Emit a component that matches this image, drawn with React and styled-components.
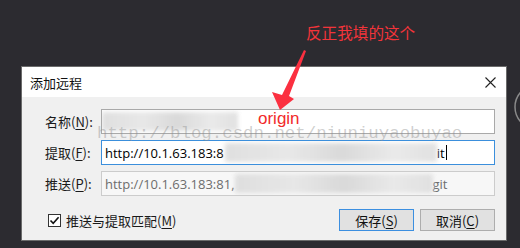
import React from "react";
import styled, { createGlobalStyle } from "styled-components";

const Global = createGlobalStyle`
  html, body { margin: 0; padding: 0; }
  body {
    background: #2c2b30;
    width: 520px;
    height: 248px;
    overflow: hidden;
    font-family: "Noto Sans CJK SC", "Liberation Sans", sans-serif;
  }
`;

const Desktop = styled.div`
  position: relative;
  width: 520px;
  height: 248px;
  padding: 66px 0 0 21px;
  box-sizing: border-box;
`;

const Dialog = styled.div`
  width: 486px;
  height: 175px;
  box-sizing: border-box;
  border: 1px solid #6b6b6b;
  background: #f0f0f0;
  display: flex;
  flex-direction: column;
`;

const TitleBar = styled.div`
  height: 30px;
  background: #ffffff;
  display: flex;
  align-items: center;
  justify-content: space-between;
  padding: 0 10px 0 8px;
  font-size: 13px;
  color: #111;
`;

const CloseBtn = styled.svg`
  width: 11px;
  height: 11px;
`;

const Body = styled.div`
  flex: 1;
  padding: 12px 11px 0 23px;
  display: flex;
  flex-direction: column;
  gap: 6px;
`;

const Row = styled.div`
  display: flex;
  align-items: center;
  height: 25px;
`;

const Label = styled.div`
  width: 56px;
  font-size: 13px;
  color: #1a1a1a;
  white-space: nowrap;
  u { text-decoration: underline; text-underline-offset: 2px; }
`;

const Field = styled.div`
  position: relative;
  flex: 1;
  height: 25px;
  box-sizing: border-box;
  border: 1px solid ${(p) => (p.$focus ? "#3b8fdc" : p.$disabled ? "#cccccc" : "#a9a9a9")};
  background: ${(p) => (p.$disabled ? "#f7f7f7" : "#ffffff")};
  color: ${(p) => (p.$disabled ? "#6d6d6d" : "#000")};
  display: flex;
  align-items: center;
  padding-left: 3px;
  font-family: "Open Sans", "Liberation Sans", sans-serif;
  font-size: 13px;
  overflow: hidden;
  white-space: nowrap;
`;

const Blur = styled.span`
  display: inline-block;
  width: ${(p) => p.$w}px;
  height: 19px;
  margin-left: ${(p) => p.$ml || 0}px;
  background: linear-gradient(90deg, #dcdcdc, #e6e6e6 30%, #d6d6d6 55%, #e8e8e8 80%, #dedede);
  filter: blur(2px);
  opacity: 0.9;
`;

const Caret = styled.span`
  display: inline-block;
  width: 1px;
  height: 15px;
  background: #000;
  margin-left: 1px;
`;

const Origin = styled.span`
  position: absolute;
  left: 156px;
  top: -1px;
  font-family: "Liberation Sans", sans-serif;
  font-size: 17px;
  color: #f22a2a;
`;

const Footer = styled.div`
  display: flex;
  align-items: center;
  height: 22px;
  margin-top: 7px;
`;

const Check = styled.label`
  display: flex;
  align-items: center;
  gap: 5px;
  margin-left: 3px;
  font-size: 13px;
  color: #1a1a1a;
  flex: 1;
  u { text-decoration: underline; text-underline-offset: 2px; }
`;

const Box = styled.span`
  width: 13px;
  height: 13px;
  box-sizing: border-box;
  border: 1px solid #333;
  background: #fff;
  display: flex;
  align-items: center;
  justify-content: center;
`;

const Buttons = styled.div`
  display: flex;
  gap: 6px;
`;

const Button = styled.button`
  width: ${(p) => p.$w}px;
  height: 22px;
  box-sizing: border-box;
  border: 1px solid ${(p) => (p.$default ? "#3c8fe0" : "#adadad")};
  background: #e1e1e1;
  font-family: "Noto Sans CJK SC", sans-serif;
  font-size: 13px;
  color: #111;
  padding: 0;
  display: flex;
  align-items: center;
  justify-content: center;
  u { text-decoration: underline; text-underline-offset: 2px; }
`;

const Watermark = styled.div`
  position: absolute;
  left: 97px;
  top: 124px;
  font-family: "Liberation Mono", monospace;
  font-size: 17.4px;
  color: rgba(140, 140, 140, 0.42);
  pointer-events: none;
  white-space: nowrap;
`;

const Note = styled.div`
  position: absolute;
  left: 306px;
  top: 21px;
  font-size: 15.6px;
  color: #f2343a;
`;

const Overlay = styled.svg`
  position: absolute;
  left: 0;
  top: 0;
  pointer-events: none;
`;

export default function App() {
  return (
    <>
      <Global />
      <Desktop>
        <Dialog>
          <TitleBar>
            <span>添加远程</span>
            <CloseBtn viewBox="0 0 11 11">
              <path d="M0.5 0.5 L10.5 10.5 M10.5 0.5 L0.5 10.5" stroke="#222" strokeWidth="1.1" />
            </CloseBtn>
          </TitleBar>
          <Body>
            <Row>
              <Label>名称(<u>N</u>):</Label>
              <Field>
                <Blur $w={136} $ml={-3} />
                <Origin>origin</Origin>
              </Field>
            </Row>
            <Row>
              <Label>提取(<u>F</u>):</Label>
              <Field $focus>
                http://10.1.63.183:8
                <Blur $w={212} $ml={1} />
                it
                <Caret />
              </Field>
            </Row>
            <Row>
              <Label>推送(<u>P</u>):</Label>
              <Field $disabled>
                http://10.1.63.183:81,
                <Blur $w={198} />
                git
              </Field>
            </Row>
            <Footer>
              <Check>
                <Box>
                  <svg width="11" height="11" viewBox="0 0 11 11">
                    <path d="M1.5 5.5 L4.2 8.3 L9.6 2.2" fill="none" stroke="#111" strokeWidth="1.6" />
                  </svg>
                </Box>
                <span>推送与提取匹配(<u>M</u>)</span>
              </Check>
              <Buttons>
                <Button $w={75} $default>保存(<u>S</u>)</Button>
                <Button $w={75}>取消(<u>C</u>)</Button>
              </Buttons>
            </Footer>
          </Body>
        </Dialog>
        <Watermark>http://blog.csdn.net/niuniuyaobuyao</Watermark>
        <Note>反正我填的这个</Note>
        <Overlay width="520" height="248" viewBox="0 0 520 248">
          <polygon points="304,50 306,51 289,96 294,99 280,110 272,92 282,95" fill="#fb3040" />
          <circle cx="537" cy="107" r="22" fill="none" stroke="#8a8a8a" strokeWidth="1.5" />
        </Overlay>
      </Desktop>
    </>
  );
}
